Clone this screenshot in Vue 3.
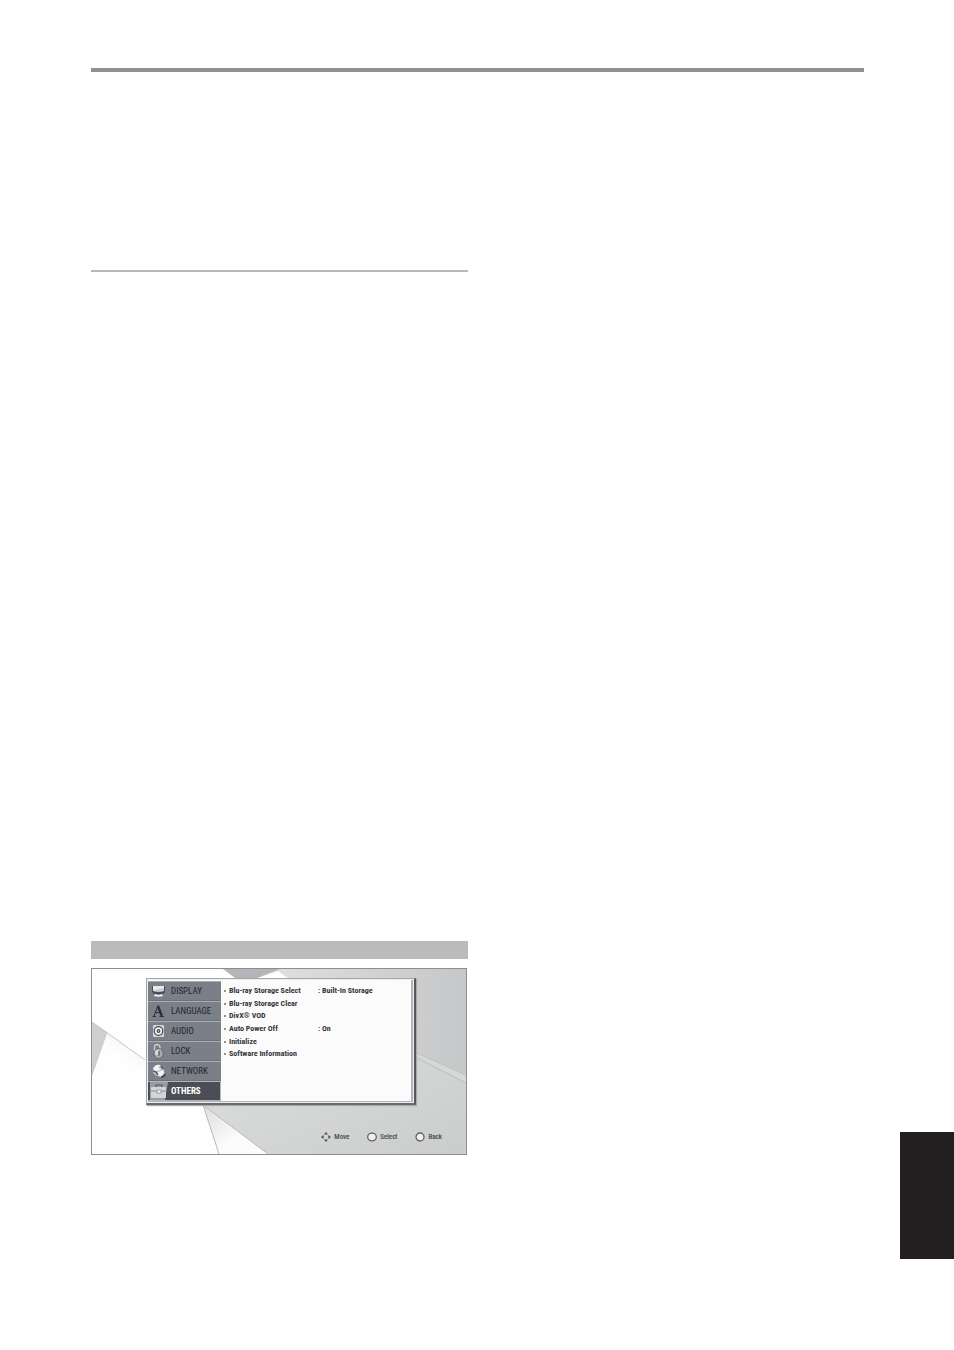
<script setup>
import { ref } from 'vue'

const menu = ['DISPLAY', 'LANGUAGE', 'AUDIO', 'LOCK', 'NETWORK', 'OTHERS']
const active = ref('OTHERS')

const options = [
  { label: 'Blu-ray Storage Select', value: 'Built-In Storage' },
  { label: 'Blu-ray Storage Clear' },
  { label: 'DivX® VOD' },
  { label: 'Auto Power Off', value: 'On' },
  { label: 'Initialize' },
  { label: 'Software Information' },
]

const hints = ['Move', 'Select', 'Back']
</script>

<template>
  <div class="page">
    <main class="sheet">
      <div class="top-rule" />
      <div class="columns">
        <section class="column">
          <div class="section-rule" />
          <div class="heading-bar" />

          <div class="screen">
            <svg class="backdrop" viewBox="0 0 374 185" preserveAspectRatio="none" aria-hidden="true">
              <defs>
                <linearGradient id="base" x1="0" y1="0" x2="1" y2="1">
                  <stop offset="0" stop-color="#e2e2e2" />
                  <stop offset=".5" stop-color="#d9dada" />
                  <stop offset="1" stop-color="#cbcccc" />
                </linearGradient>
                <linearGradient id="upper" x1="0" y1="0" x2="1" y2="0">
                  <stop offset="0" stop-color="#dedede" />
                  <stop offset="1" stop-color="#c6c7c8" />
                </linearGradient>
                <linearGradient id="fold" x1="0" y1="0" x2="1" y2="1">
                  <stop offset="0" stop-color="#dcdcdc" />
                  <stop offset=".6" stop-color="#fcfcfc" />
                </linearGradient>
                <linearGradient id="edge" x1="0" y1="1" x2="1" y2="0">
                  <stop offset=".45" stop-color="#fefefe" />
                  <stop offset="1" stop-color="#e2e2e2" />
                </linearGradient>
              </defs>
              <rect width="374" height="185" fill="url(#base)" />
              <path d="M185 0H374V106L325 84L198 10Z" fill="url(#upper)" />
              <path d="M0 0H131L200 50L111 136L176 185H0Z" fill="#fefefe" />
              <path d="M131 0H188L160 11H146Z" fill="#b4b5b8" />
              <path d="M160 11L186 2L200 12Z" fill="#fff" />
              <path d="M0 53L15 63L0 106Z" fill="#cfcfd0" />
              <path d="M15 63L111 136L0 106Z" fill="url(#edge)" />
              <path d="M0 53L53 91" stroke="#c4c4c4" stroke-width="1" />
              <path d="M15 63L0 106" stroke="#c9c9c9" stroke-width="1" />
              <path d="M111 136L176 185H127Z" fill="url(#fold)" />
              <path d="M111 136L127 185M111 136L176 185" stroke="#b9b9b9" stroke-width="1" fill="none" />
              <path d="M325 84L374 106V114L325 89Z" fill="#d6d7d7" />
              <path d="M325 84L374 106M325 89L374 114" stroke="#bcbdbd" stroke-width="1" fill="none" />
            </svg>

            <div class="panel">
              <nav class="menu">
                <button
                  v-for="item in menu"
                  :key="item"
                  type="button"
                  class="menu-item"
                  :class="{ active: active === item }"
                  @click="active = item"
                >
                  <svg class="menu-icon" viewBox="0 0 18 18" aria-hidden="true">
                    <g v-if="item === 'DISPLAY'">
                      <path d="M2 4H15V10Q13 13 8.500 13T2 10Z" fill="#4a4d54" />
                      <path d="M3 4H14V9Q9 11 3 9Z" fill="#c9cbcf" />
                      <path d="M3 4H14V6Q8 7 3 9Z" fill="#e9eaeb" />
                      <path d="M5 12Q8.500 13.500 12 12L13 14Q8.500 15.500 4 14Z" fill="#eeeff0" />
                    </g>
                    <g v-else-if="item === 'LANGUAGE'" fill="none" stroke="#2d3036">
                      <path d="M4 14L8 3.500" stroke-width="1" />
                      <path d="M8 4L11.800 14" stroke-width="2.400" />
                      <path d="M5.500 10.500H10M2.500 14.500H6M9.500 14.500H14" stroke-width="1" />
                    </g>
                    <g v-else-if="item === 'AUDIO'">
                      <rect x="3" y="3" width="11" height="12" rx="1" fill="#d4d5d8" />
                      <circle cx="8.500" cy="9" r="4.300" fill="#f2f2f2" stroke="#44474d" stroke-width="1.200" />
                      <circle cx="8.500" cy="9" r="1.900" fill="#44474d" />
                      <circle cx="8.500" cy="9" r=".7" fill="#eee" />
                    </g>
                    <g v-else-if="item === 'LOCK'">
                      <path d="M4.500 9V5.500Q4.500 2.500 7 2.500T10 5.500V8" fill="none" stroke="#c9cbcf" stroke-width="1.400" />
                      <ellipse cx="8.500" cy="11.500" rx="4.600" ry="5" fill="#a9abb0" stroke="#55585e" stroke-width=".7" />
                      <circle cx="7.500" cy="10.500" r="2.500" fill="#dcdde0" />
                      <path d="M9 9V13.500" stroke="#45484e" stroke-width="1.300" />
                    </g>
                    <g v-else-if="item === 'NETWORK'">
                      <circle cx="8.500" cy="8.500" r="5.800" fill="#b4b6bb" />
                      <path d="M3 7Q5 2 10 3L9 6L11 8L6 9Z" fill="#f5f5f5" />
                      <path d="M8 10L13 8L14.500 11L11 15L7 13Z" fill="#f1f1f2" />
                      <path d="M3 9L6 10L8 13M11 4L13.500 7" fill="none" stroke="#4a4d54" stroke-width="1.300" />
                      <path d="M11 15Q14.500 15 15 12" fill="none" stroke="#2f3238" stroke-width="1.300" />
                    </g>
                    <g v-else>
                      <path d="M0 0H18L15 18H0Z" fill="#9c9da1" />
                      <path d="M6 5V3H12V5" fill="none" stroke="#55575c" stroke-width="1.200" />
                      <rect x="1" y="5" width="15" height="11" rx="1" fill="#d3d4d6" />
                      <path d="M1 9H16" stroke="#8a8c91" stroke-width="1" />
                      <rect x="7" y="8" width="4" height="3" fill="#f3f3f3" stroke="#77797e" stroke-width=".6" />
                    </g>
                  </svg>
                  {{ item }}
                </button>
              </nav>

              <ul class="options">
                <li v-for="option in options" :key="option.label">
                  <button type="button" class="option">
                    <span class="dot" />
                    <span class="option-label">{{ option.label }}</span>
                    <span v-if="option.value">: {{ option.value }}</span>
                  </button>
                </li>
              </ul>
            </div>

            <div class="hints">
              <span v-for="hint in hints" :key="hint" class="hint">
                <svg class="hint-icon" viewBox="0 0 10 10" aria-hidden="true">
                  <path
                    v-if="hint === 'Move'"
                    d="M5 0L7 2.600H3ZM5 10L7 7.400H3ZM0 5L2.600 3V7ZM10 5L7.400 3V7Z"
                    fill="#4c4f56"
                  />
                  <ellipse
                    v-else
                    cx="5"
                    cy="5"
                    :rx="hint === 'Select' ? 4.3 : 4"
                    :ry="hint === 'Select' ? 3.8 : 4"
                    fill="#f0f0f0"
                    stroke="#5e6168"
                    stroke-width="1.300"
                  />
                </svg>
                {{ hint }}
              </span>
            </div>
          </div>
        </section>
      </div>
    </main>
    <aside class="side-tab" />
  </div>
</template>

<style>
body { margin: 0; background: #fff; }
</style>

<style scoped>
.page { display: grid; grid-template-columns: 1fr 54px; column-gap: 36px; padding-left: 91px; min-height: 100vh; font-family: "Roboto Condensed", Lato, "Liberation Sans", sans-serif; }
.sheet { padding-top: 68px; }
.top-rule { height: 4px; background: #919090; }
.columns { display: grid; grid-template-columns: 377fr 396fr; }
.section-rule { height: 2px; margin-top: 198px; background: #b9b9b9; }
.heading-bar { height: 18px; margin-top: 669px; background: #bbb; }
.side-tab { height: 127px; margin-top: 1132px; background: #231f20; }

button { margin: 0; padding: 0; border: 0; background: none; font: inherit; color: inherit; text-align: left; cursor: pointer; }

.screen { position: relative; margin: 9px 1px 0 0; padding: 9px 50px 11px 54px; border: 1px solid #8e8e8e; overflow: hidden; }
.backdrop { position: absolute; inset: 0; width: 100%; height: 100%; }

.panel { position: relative; display: grid; grid-template-columns: 73px 1fr; box-sizing: border-box; height: 127px; border: 1px solid #a3a6aa; border-right: 2px solid #55585e; border-bottom: 2px solid #66696e; box-shadow: inset 0 0 0 1px #eceded, inset -2px -1px 0 1px #b3b5b9, 1px 1px 1px #aaa; background: #fbfbfb; padding: 2px 3px 2px 1px; }

.menu { display: grid; grid-template-rows: repeat(6, 1fr); background: #7b7f88; color: #22252b; font-size: 9px; line-height: 10px; }
.menu-item { display: flex; align-items: center; gap: 3px; padding-left: 2px; border-top: 1px solid #a9acb2; border-bottom: 1px solid #6e727a; }
.menu-icon { width: 18px; height: 18px; }
.menu-item.active { background: #4c4e56; border-color: #b4b6ba; box-shadow: inset -1px 0 0 #b4b6ba; color: #fff; font-weight: 700; }

.options { display: grid; grid-template-rows: repeat(6, 1fr); height: 76px; margin: 4px 0 0; padding: 0 0 0 3px; list-style: none; font-size: 8px; line-height: 12px; font-weight: 700; color: #35363a; }
.option { display: flex; align-items: center; width: 100%; }
.dot { width: 2px; height: 2px; margin-right: 3px; border-radius: 50%; background: #6a6b6f; }
.option-label { width: 89px; }

.hints { position: relative; display: flex; justify-content: flex-end; gap: 18px; margin: 27px -26px 0 0; padding-bottom: 1px; font-size: 7px; line-height: 10px; color: #4c4e54; }
.hint { display: flex; align-items: center; gap: 3px; -webkit-text-stroke: 0.2px currentColor; }
.hint-icon { width: 10px; height: 10px; }
</style>
